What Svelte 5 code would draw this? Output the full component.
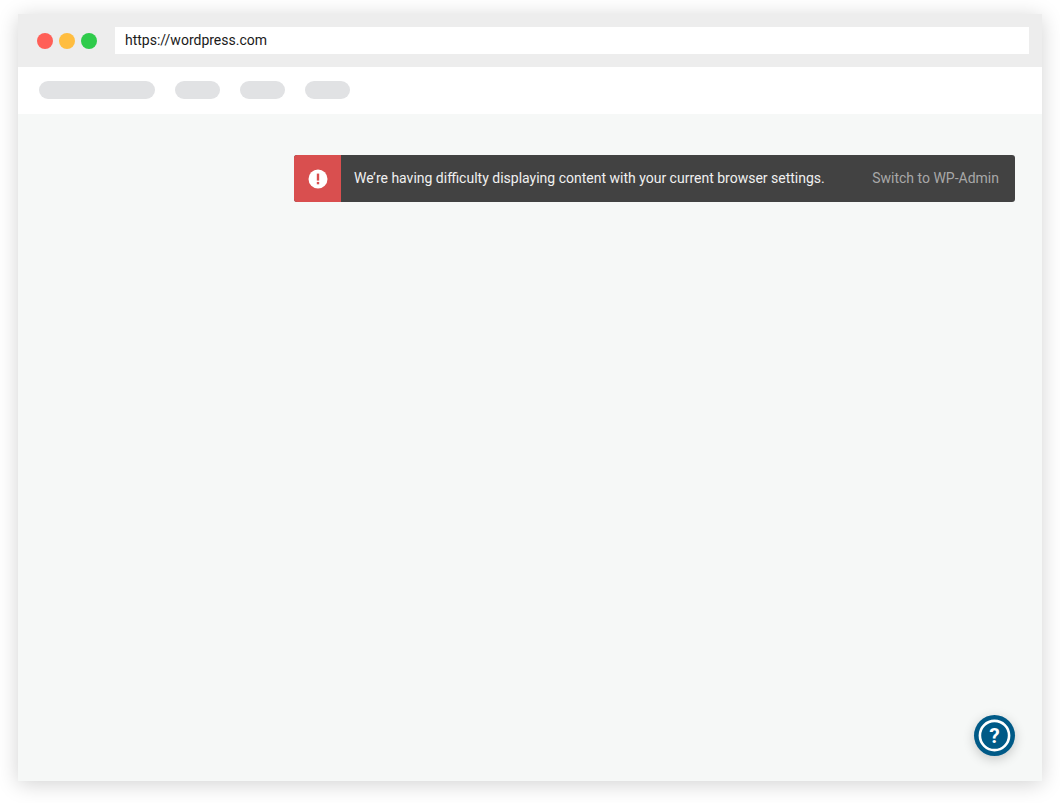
<script lang="ts">
  const skeletons = [116, 45, 45, 45];
  const lights = ["#ff5f57", "#ffbd3f", "#2fcb4b"];
</script>

<div class="page">
  <div class="window">
    <header class="chrome">
      <div class="lights">
        {#each lights as color}
          <span class="light" style="background: {color}"></span>
        {/each}
      </div>
      <div class="address">https://wordpress.com</div>
    </header>

    <nav class="toolbar">
      {#each skeletons as width}
        <span class="pill" style="width: {width}px"></span>
      {/each}
    </nav>

    <main class="content">
      <div class="notice">
        <div class="notice-icon">
          <svg width="20" height="20" viewBox="0 0 20 20">
            <circle cx="10" cy="10" r="9.5" fill="#fff" />
            <rect x="8.8" y="4.6" width="2.4" height="7" fill="#d94f4f" />
            <rect x="8.8" y="12.9" width="2.4" height="2.4" fill="#d94f4f" />
          </svg>
        </div>
        <span class="notice-text">We’re having difficulty displaying content with your current browser settings.</span>
        <a class="notice-action" href="#admin">Switch to WP-Admin</a>
      </div>

      <button class="help" aria-label="Help">
        <svg width="41" height="41" viewBox="0 0 41 41">
          <circle cx="20.5" cy="20.5" r="14.6" fill="none" stroke="#fff" stroke-width="2.6" />
          <text x="20.5" y="28" text-anchor="middle" class="help-mark">?</text>
        </svg>
      </button>
    </main>
  </div>
</div>

<style>
  :global(body) {
    margin: 0;
    background: #fff;
  }

  .page {
    width: 1060px;
    height: 803px;
    padding: 14px 18px 22px;
    box-sizing: border-box;
    font-family: Roboto, "Liberation Sans", sans-serif;
  }

  .window {
    height: 100%;
    display: flex;
    flex-direction: column;
    box-shadow: 0 3px 20px rgba(0, 0, 0, 0.18);
  }

  .chrome {
    height: 53px;
    flex: none;
    display: flex;
    align-items: center;
    padding: 0 13px 0 19px;
    background: #ededed;
  }

  .lights {
    display: flex;
    gap: 6px;
    width: 78px;
  }

  .light {
    width: 16px;
    height: 16px;
    border-radius: 50%;
  }

  .address {
    flex: 1;
    height: 27px;
    line-height: 27px;
    padding-left: 10px;
    background: #fff;
    color: #1a1a1a;
    font-size: 14px;
  }

  .toolbar {
    height: 47px;
    flex: none;
    display: flex;
    align-items: flex-start;
    gap: 20px;
    padding: 14px 0 0 21px;
    box-sizing: border-box;
    background: #fff;
  }

  .pill {
    height: 18px;
    border-radius: 9px;
    background: #e1e2e4;
  }

  .content {
    position: relative;
    flex: 1;
    padding: 41px 27px 0 276px;
    background: #f6f8f7;
  }

  .notice {
    height: 47px;
    display: flex;
    align-items: center;
    border-radius: 3px;
    overflow: hidden;
    background: #424242;
    font-size: 14px;
    line-height: 47px;
  }

  .notice-icon {
    width: 47px;
    height: 47px;
    flex: none;
    display: flex;
    align-items: center;
    justify-content: center;
    background: #d94f4f;
  }

  .notice-text {
    flex: 1;
    height: 47px;
    padding-left: 13px;
    color: #f0f0f0;
  }

  .notice-action {
    height: 47px;
    padding-right: 16px;
    color: #a8a8a8;
    text-decoration: none;
  }

  .help {
    position: absolute;
    right: 27px;
    bottom: 25px;
    width: 41px;
    height: 41px;
    padding: 0;
    border: 0;
    border-radius: 50%;
    background: #005a87;
    box-shadow: 0 3px 12px rgba(0, 0, 0, 0.2);
  }

  .help svg {
    display: block;
  }

  .help-mark {
    fill: #fff;
    font-family: Roboto, "Liberation Sans", sans-serif;
    font-size: 21px;
    font-weight: 700;
  }
</style>
